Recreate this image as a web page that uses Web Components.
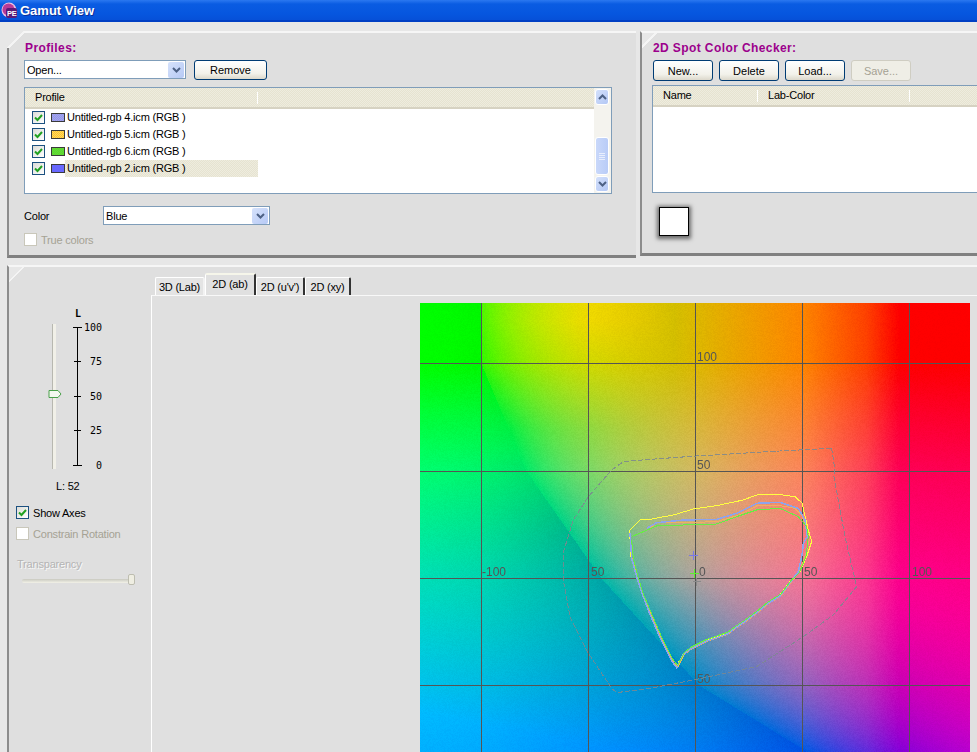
<!DOCTYPE html>
<html>
<head>
<meta charset="utf-8">
<title>Gamut View</title>
<style>
html, body { margin: 0; padding: 0; height: 100%; overflow: hidden; background: #e7e7e7; }
body { font: 11px "Liberation Sans", Arial, sans-serif; letter-spacing: -.2px; color: #000; }
</style>
</head>
<body>
<gamut-app></gamut-app>

<script>
const CHEVRON_DOWN = '<svg width="9" height="6" viewBox="0 0 9 6"><path d="M1 1l3.5 3.5L8 1" fill="none" stroke="#4d6185" stroke-width="2"/></svg>';
const CHEVRON_UP = '<svg width="9" height="6" viewBox="0 0 9 6"><path d="M1 5l3.5-3.5L8 5" fill="none" stroke="#4d6185" stroke-width="2"/></svg>';
const DITHER = 'repeating-conic-gradient(#eeecdf 0 25%, #e6e3d0 0 50%) 0 0/2px 2px';

class TitleBar extends HTMLElement {
    constructor() {
        super();
        this.attachShadow({ mode: 'open' }).innerHTML = `
            <style>
                :host {
                    display: flex;
                    align-items: center;
                    gap: 3px;
                    height: 22px;
                    box-sizing: border-box;
                    padding: 0 0 2px 1px;
                    background: linear-gradient(#2b78f0 0, #0a5ce2 4px, #0656df 14px, #0650d8 20px, #003fc4 20px);
                }
                span {
                    color: #fff;
                    font: bold 13px "Liberation Sans", Arial, sans-serif;
                    letter-spacing: 0;
                    text-shadow: 1px 1px 0 #0a2f9a;
                }
            </style>
            <svg width="16" height="16" viewBox="0 0 16 16">
                <circle cx="8" cy="8" r="7.5" fill="#f0c0e0"/>
                <circle cx="7.5" cy="7.5" r="6" fill="#b83a98"/>
                <rect x="5" y="6" width="11" height="10" rx="2" fill="#5c1a78"/>
                <text x="6" y="14" font-size="7.5" font-weight="bold" fill="#fff" font-family="Liberation Sans">PE</text>
            </svg>
            <span><slot></slot></span>
        `;
    }
}

class BevelPanel extends HTMLElement {
    constructor() {
        super();
        this.attachShadow({ mode: 'open' }).innerHTML = `
            <style>
                :host {
                    display: block;
                    position: relative;
                    box-sizing: border-box;
                    background: #dfdfdf;
                    border-top: 2px solid #f6f6f6;
                    border-left: 2px solid #8c8c8c;
                    border-bottom: 3px solid #808080;
                }
                :host::before {
                    content: "";
                    position: absolute;
                    left: -2px;
                    top: -2px;
                    width: 17px;
                    height: 17px;
                    background: linear-gradient(135deg, #e7e7e7 50%, #f4f4f4 50%, #f4f4f4 58%, transparent 58%);
                }
            </style>
            <slot></slot>
        `;
    }
}

class XpButton extends HTMLElement {
    constructor() {
        super();
        this.attachShadow({ mode: 'open' }).innerHTML = `
            <style>
                :host {
                    display: flex;
                    align-items: center;
                    justify-content: center;
                    box-sizing: border-box;
                    height: 21px;
                    border: 1px solid #003c74;
                    border-radius: 3px;
                    background: linear-gradient(#ffffff, #f2f1ea 70%, #dcd8cb);
                    font-size: 11px;
                    letter-spacing: 0;
                }
                :host([disabled]) {
                    border-color: #cfcdc2;
                    background: #efeee6;
                    color: #a5a294;
                }
            </style>
            <slot></slot>
        `;
    }
}

class XpCombo extends HTMLElement {
    constructor() {
        super();
        this.attachShadow({ mode: 'open' }).innerHTML = `
            <style>
                :host {
                    display: flex;
                    align-items: center;
                    box-sizing: border-box;
                    height: 19px;
                    border: 1px solid #7f9db9;
                    background: #fff;
                    padding: 0 1px 0 2px;
                    font-size: 11px;
                }
                span { flex: 1; }
                i {
                    display: flex;
                    align-items: center;
                    justify-content: center;
                    width: 16px;
                    height: 16px;
                    border-radius: 2px;
                    background: linear-gradient(135deg, #d6e2fb, #b6c9f5);
                }
            </style>
            <span><slot></slot></span>
            <i>${CHEVRON_DOWN}</i>
        `;
    }
}

class XpCheck extends HTMLElement {
    constructor() {
        super();
        const off = this.hasAttribute('disabled');
        const tick = this.hasAttribute('checked')
            ? '<svg width="11" height="11" viewBox="0 0 11 11"><path d="M2 5.5l2.5 2.5L9 3" fill="none" stroke="#21a121" stroke-width="2"/></svg>'
            : '';
        this.attachShadow({ mode: 'open' }).innerHTML = `
            <style>
                :host {
                    display: flex;
                    align-items: center;
                    gap: 4px;
                    height: 13px;
                    color: ${off ? '#a5a294' : '#000'};
                }
                i {
                    display: flex;
                    align-items: center;
                    justify-content: center;
                    flex: none;
                    box-sizing: border-box;
                    width: 13px;
                    height: 13px;
                    border: 1px solid ${off ? '#c9c7ba' : '#1c5180'};
                    background: ${off || !tick ? '#fff' : 'linear-gradient(135deg, #dcdcd7, #fff)'};
                }
            </style>
            <i>${tick}</i>
            <slot></slot>
        `;
    }
}

class XpList extends HTMLElement {
    constructor() {
        super();
        const cols = (this.getAttribute('columns') || '').split(',').map(c => c.split(':'));
        const head = cols.map(([name, w]) => `<span class="col" style="width:${w}px">${name}</span>`).join('');
        const bar = this.hasAttribute('scroll') ? `
            <div class="bar">
                <i class="btn">${CHEVRON_UP}</i>
                <b class="thumb"><u></u><u></u><u></u><u></u></b>
                <i class="btn">${CHEVRON_DOWN}</i>
            </div>` : '';
        this.attachShadow({ mode: 'open' }).innerHTML = `
            <style>
                :host {
                    display: flex;
                    box-sizing: border-box;
                    border: 1px solid #7f9db9;
                    background: #fff;
                    overflow: hidden;
                }
                .main { flex: 1; min-width: 0; }
                .head {
                    display: flex;
                    box-sizing: border-box;
                    height: 21px;
                    background: ${DITHER};
                    border-bottom: 2px solid #d6d2c2;
                    white-space: nowrap;
                }
                .col {
                    flex: none;
                    box-sizing: border-box;
                    padding-left: 10px;
                    line-height: 19px;
                    background: linear-gradient(#fff, #fff) right 4px / 1px 12px no-repeat;
                }
                .bar {
                    display: flex;
                    flex-direction: column;
                    flex: none;
                    box-sizing: border-box;
                    width: 17px;
                    padding: 1px 2px 1px 1px;
                    background: #f4f3ee;
                }
                .btn {
                    display: flex;
                    align-items: center;
                    justify-content: center;
                    flex: none;
                    height: 16px;
                    border: 1px solid #fff;
                    box-sizing: border-box;
                    border-radius: 3px;
                    background: linear-gradient(135deg, #d3e0fb, #b4c8f5);
                }
                .thumb {
                    display: flex;
                    flex-direction: column;
                    align-items: center;
                    justify-content: center;
                    gap: 1px;
                    box-sizing: border-box;
                    height: 38px;
                    margin: 32px 0 1px;
                    border: 1px solid #fff;
                    border-radius: 3px;
                    background: linear-gradient(90deg, #c9d8fa, #b9ccf7);
                }
                .thumb u { display: block; width: 6px; height: 1px; background: #e8eefd; }
            </style>
            <div class="main">
                <div class="head">${head}</div>
                <slot></slot>
            </div>
            ${bar}
        `;
    }
}

class ProfileRow extends HTMLElement {
    constructor() {
        super();
        const color = this.getAttribute('color');
        const dot = this.getAttribute('dot') || color;
        const sel = this.hasAttribute('selected');
        this.attachShadow({ mode: 'open' }).innerHTML = `
            <style>
                :host {
                    display: flex;
                    align-items: center;
                    height: 17px;
                    padding-left: 7px;
                }
                xp-check { flex: none; }
                .swatch {
                    flex: none;
                    box-sizing: border-box;
                    width: 14px;
                    height: 9px;
                    margin-left: 6px;
                    border: 1px solid #3a3a3a;
                    background: repeating-conic-gradient(${color} 0 25%, ${dot} 0 50%) 0 0/2px 2px;
                }
                .name {
                    flex: none;
                    box-sizing: border-box;
                    width: 193px;
                    height: 17px;
                    line-height: 17px;
                    padding-left: 2px;
                    background: ${sel ? DITHER : 'none'};
                }
            </style>
            <xp-check checked></xp-check>
            <div class="swatch"></div>
            <div class="name"><slot></slot></div>
        `;
    }
}

class XpTab extends HTMLElement {
    constructor() {
        super();
        this.attachShadow({ mode: 'open' }).innerHTML = `
            <style>
                :host {
                    display: flex;
                    align-items: center;
                    justify-content: center;
                    box-sizing: border-box;
                    height: 18px;
                    background: #e4e4e4;
                    border-top: 1px solid #fff;
                    border-left: 1px solid #fff;
                    border-right: 2px solid #333;
                    border-radius: 2px 2px 0 0;
                    white-space: nowrap;
                }
                :host([soft]) { border-right-color: #f2f2f2; }
                :host([active]) {
                    height: 22px;
                    padding-bottom: 3px;
                    background: #e0e0e0;
                    border-top: 2px solid #f6f6ea;
                }
            </style>
            <slot></slot>
        `;
    }
}

class LightnessScale extends HTMLElement {
    constructor() {
        super();
        const ticks = [[22, '100'], [56, '75'], [91, '50'], [125, '25'], [160, '0']].map(([y, t], i) => {
            const full = i === 0 || i === 4;
            return `<line x1="${full ? 64 : 65}" x2="${full ? 73 : 72}" y1="${y + .5}" y2="${y + .5}" stroke="#000"/>
                <text x="93" y="${y + 4}" text-anchor="end">${t}</text>`;
        }).join('');
        this.attachShadow({ mode: 'open' }).innerHTML = `
            <style>
                :host { display: block; height: 172px; }
                svg { display: block; }
                text { font: 10px "DejaVu Sans Mono", monospace; letter-spacing: 0; fill: #000; }
                .l { font-weight: bold; }
            </style>
            <svg width="142" height="172" shape-rendering="crispEdges">
                <text class="l" x="66" y="12">L</text>
                <rect x="43" y="19" width="4" height="145" fill="#f1f0e8"/>
                <rect x="43" y="19" width="1" height="145" fill="#b8b8b0"/>
                <line x1="68.5" x2="68.5" y1="22" y2="160" stroke="#000"/>
                ${ticks}
                <path d="M40 85.5h9l3 3.5-3 3.5h-9z" fill="#f4f8f0" stroke="#4aa04a" shape-rendering="auto"/>
            </svg>
        `;
    }
}

class TransparencySlider extends HTMLElement {
    constructor() {
        super();
        this.attachShadow({ mode: 'open' }).innerHTML = `
            <style>
                :host { display: block; height: 14px; margin-left: 13px; position: relative; }
                .track {
                    margin-top: 5px;
                    width: 113px;
                    height: 4px;
                    border-radius: 2px;
                    background: linear-gradient(#c9c9c0, #f3f2e8);
                    position: absolute;
                }
                .thumb {
                    position: absolute;
                    left: 106px;
                    top: 0;
                    width: 7px;
                    height: 11px;
                    box-sizing: border-box;
                    border: 1px solid #bdbdb0;
                    border-radius: 2px;
                    background: #efeee2;
                }
            </style>
            <div class="track"></div>
            <div class="thumb"></div>
        `;
    }
}

// piecewise linear lookup, table sorted by x
function lerp(table, x) {
    if (x <= table[0][0]) return table[0][1];
    for (let i = 1; i < table.length; i++) {
        if (x <= table[i][0]) {
            const [x0, y0] = table[i - 1];
            const [x1, y1] = table[i];
            return y0 + (y1 - y0) * (x - x0) / (x1 - x0);
        }
    }
    return table[table.length - 1][1];
}

class GamutPlot extends HTMLElement {
    constructor() {
        super();
        const line = (pts, color, width, extra = '') =>
            `<polyline fill="none" stroke="${color}" stroke-width="${width}" ${extra} points="${pts.map(p => p.join(',')).join(' ')}" vector-effect="non-scaling-stroke"/>`;
        const outer = [[845,25],[855,90],[852,110],[885,290],[920,440],[850,525],[760,590],[620,680],[430,720],[300,745],[200,758],[185,745],[115,640],[60,530],[40,420],[42,330],[70,240],[115,170],[185,90],[220,65],[300,58],[440,48],[540,42],[650,35],[845,25]];
        const tail = [[300,520],[315,555],[330,590],[350,630],[365,660],[380,680],[387,665],[400,640],[420,625],[440,615],[470,600],[500,590],[530,580],[550,565],[580,545],[620,515],[650,490],[690,465],[720,425]];
        const yellow = [[238,270],[240,295],[243,350],[260,410],[275,460],...tail,[750,395],[770,350],[785,305],[775,270],[762,215],[757,190],[735,170],[700,165],[620,165],[580,180],[500,197],[430,207],[370,225],[300,238],[270,240],[240,270]];
        const orange = [[240,285],[246,355],[262,410],[277,460],...tail.map(([x, y]) => [x + 3, y + 3]),[748,393],[765,350],[778,300],[770,265],[755,225],[735,205],[690,197],[620,198],[565,226],[500,245],[400,248],[320,248],[295,268]];
        const blue = [[240,280],[245,355],[260,410],[276,460],...tail.map(([x, y]) => [x, y + 3]),[745,395],[757,340],[760,310],[772,290],[765,240],[745,205],[690,187],[620,190],[560,220],[500,238],[400,240],[320,248],[290,265]];
        const green = [[245,300],[250,355],[264,410],[279,460],...tail.map(([x, y]) => [x + 3, y - 3]),[748,398],[768,350],[775,290],[770,260],[745,230],[690,205],[620,210],[560,230],[500,252],[400,255],[320,258],[280,275],[245,290]];
        const grid = [61, 168, 275, 382, 489].map(x => `<line x1="${x + .5}" x2="${x + .5}" y1="0" y2="449"/>`).join('')
            + [60, 168, 275, 382].map(y => `<line x1="0" x2="550" y1="${y + .5}" y2="${y + .5}"/>`).join('');
        const labels = [[277,58,'100'],[277,166,'50'],[62,273,'-100'],[171,273,'50'],[279,273,'0'],[384,273,'50'],[492,273,'100'],[277,380,'50']]
            .map(([x, y, t]) => `<text x="${x}" y="${y}">${t}</text>`).join('');
        const mark = (x, y, c, s) => `<path d="M${x - s} ${y}h${s * 2}M${x} ${y - s}v${s * 2}" stroke="${c}" fill="none" vector-effect="non-scaling-stroke"/>`;
        this.attachShadow({ mode: 'open' }).innerHTML = `
            <style>
                :host { display: block; position: relative; width: 550px; height: 449px; }
                canvas, svg { position: absolute; left: 0; top: 0; }
                text { font: 12px "Liberation Sans", Arial, sans-serif; letter-spacing: 0; fill: #555; }
            </style>
            <canvas width="550" height="449"></canvas>
            <svg width="550" height="449" viewBox="0 0 550 449">
                <g stroke="#555" shape-rendering="crispEdges">${grid}</g>
                ${labels}
                <g transform="translate(130 137) scale(.3333)" shape-rendering="crispEdges">
                    ${line(outer, '#7c8890', 1, 'stroke-dasharray="5 2" opacity=".85"')}
                    ${line(yellow, '#ffff40', 1)}
                    ${line(orange, '#f0b060', 1)}
                    ${line(blue, '#8ea4ec', 1.5)}
                    ${line(green, '#66ee44', 1)}
                    ${mark(430, 347, '#7878e8', 13)}
                    ${mark(440, 425, '#8a8a8a', 12)}
                    ${mark(433, 400, '#60f030', 13)}
                </g>
            </svg>
        `;
    }

    connectedCallback() {
        const ctx = this.shadowRoot.querySelector('canvas').getContext('2d');
        const img = ctx.createImageData(550, 449);
        const clamp = v => Math.max(0, Math.min(1, v));
        // channel curves read off the reference, a and b in Lab units
        const redEdge = [[-90, 60], [-80, 51], [-50, 2], [0, -44], [50, -79], [100, -100], [130, -100]];
        const greenByA = [[-128, 1], [-100, .97], [-50, .85], [0, .72], [50, .52], [80, .25], [95, 0]];
        const blueByB = [[-90, 1], [-80, .95], [-50, .8], [0, .62], [25, .5], [50, .38], [75, .2], [100, 0]];
        for (let y = 0; y < 449; y++) {
            for (let x = 0; x < 550; x++) {
                const a = (x - 275) / 107 * 50;
                const b = (275 - y) / 107.3 * 50;
                const d = a - lerp(redEdge, b);
                const k = 32 + 28 * clamp(-b / 50);
                let r = d <= 0 ? 0 : (1 - Math.exp(-d / k)) * (.8 + .2 * clamp((a + 50) / 100))
                    + .3 * clamp((b - 70) / 50) * clamp((-10 - a) / 40);
                let g = clamp(.88 + .0024 * b) * lerp(greenByA, a);
                if (d < 0) g *= 1 - .12 * Math.exp(d / 30) * clamp((60 - b) / 40);
                let bl = clamp(lerp(blueByB, b) * (1 - .0012 * a));
                // dotted dither seen all over the field
                const n = (((x * 7 + y * 13) ^ (x * y)) % 5 - 2) * 1.6;
                const i = (y * 550 + x) * 4;
                img.data[i] = clamp(r) * 255 + (r > 0 ? n : 0);
                img.data[i + 1] = g * 255 + (g > 0 ? n : 0);
                img.data[i + 2] = bl * 255 + (bl > 0 ? n : 0);
                img.data[i + 3] = 255;
            }
        }
        ctx.putImageData(img, 0, 0);
    }
}

class GamutApp extends HTMLElement {
    constructor() {
        super();
        this.attachShadow({ mode: 'open' }).innerHTML = `
            <style>
                :host {
                    display: flex;
                    flex-direction: column;
                    width: 977px;
                    height: 752px;
                    overflow: hidden;
                }
                .top { display: flex; gap: 4px; padding: 9px 0 0 7px; align-items: flex-start; }
                .profiles { flex: none; width: 629px; height: 227px; box-sizing: border-box; padding: 9px 0 0 15px; }
                .checker { flex: 1; min-width: 0; overflow: hidden; height: 225px; box-sizing: border-box; padding: 9px 0 0 10px; }
                h2 {
                    margin: 0 0 5px 1px;
                    height: 13px;
                    font: bold 12px/13px "Liberation Sans", Arial, sans-serif;
                    letter-spacing: .4px;
                    color: #9c008c;
                }
                .row { display: flex; align-items: flex-start; gap: 8px; }
                .row.btns { gap: 6px; margin: 0 0 4px 1px; }
                .open { width: 162px; }
                .remove { width: 73px; height: 20px; }
                .btns xp-button { width: 60px; flex: none; }
                .plist { width: 588px; height: 107px; margin-top: 7px; }
                .color { display: flex; align-items: center; margin-top: 12px; }
                .color span { width: 79px; }
                .color xp-combo { width: 167px; }
                .true { margin-top: 8px; }
                .slist { width: 340px; height: 108px; }
                .swatch {
                    box-sizing: border-box;
                    width: 30px;
                    height: 29px;
                    margin: 14px 0 0 7px;
                    background: #fff;
                    border: 1px solid #000;
                    box-shadow: 0 1px 4px 2px #6a6a6a;
                }
                .bottom { flex: 1; min-height: 0; margin: 7px 0 0 7px; display: flex; overflow: hidden; border-bottom: 0; }
                .controls { width: 142px; flex: none; padding-top: 38px; box-sizing: border-box; }
                .lval { height: 14px; line-height: 14px; margin-top: 2px; padding-left: 47px; }
                .show { margin: 13px 0 0 7px; }
                .constrain { margin: 8px 0 0 7px; }
                .transp {
                    margin: 17px 0 3px 8px;
                    height: 14px;
                    line-height: 14px;
                    color: #b4b4b4;
                    text-shadow: 1px 1px 0 #f8f8f8;
                }
                .view { flex: 1; min-width: 0; display: flex; flex-direction: column; }
                .tabs { display: flex; align-items: flex-end; height: 28px; flex: none; padding-left: 4px; }
                .stage {
                    flex: 1;
                    min-height: 0;
                    background: #e0e0e0;
                    border-left: 1px solid #fff;
                    border-top: 1px solid #f8f8f8;
                    padding: 7px 0 0 268px;
                }
            </style>
            <title-bar>Gamut View</title-bar>
            <div class="top">
                <bevel-panel class="profiles">
                    <h2>Profiles:</h2>
                    <div class="row">
                        <xp-combo class="open">Open...</xp-combo>
                        <xp-button class="remove">Remove</xp-button>
                    </div>
                    <xp-list class="plist" columns="Profile:233" scroll>
                        <profile-row color="#8f9ce8" dot="#a9a0f0">Untitled-rgb 4.icm (RGB )</profile-row>
                        <profile-row color="#ffc42e" dot="#ffd860">Untitled-rgb 5.icm (RGB )</profile-row>
                        <profile-row color="#58e422" dot="#66cc44">Untitled-rgb 6.icm (RGB )</profile-row>
                        <profile-row color="#6868ff" selected>Untitled-rgb 2.icm (RGB )</profile-row>
                    </xp-list>
                    <div class="color">
                        <span>Color</span>
                        <xp-combo>Blue</xp-combo>
                    </div>
                    <xp-check class="true" disabled>True colors</xp-check>
                </bevel-panel>
                <bevel-panel class="checker">
                    <h2>2D Spot Color Checker:</h2>
                    <div class="row btns">
                        <xp-button>New...</xp-button>
                        <xp-button>Delete</xp-button>
                        <xp-button>Load...</xp-button>
                        <xp-button disabled>Save...</xp-button>
                    </div>
                    <xp-list class="slist" columns="Name:105,Lab-Color:152"></xp-list>
                    <div class="swatch"></div>
                </bevel-panel>
            </div>
            <bevel-panel class="bottom">
                <div class="controls">
                    <lightness-scale></lightness-scale>
                    <div class="lval">L: 52</div>
                    <xp-check class="show" checked>Show Axes</xp-check>
                    <xp-check class="constrain" disabled>Constrain Rotation</xp-check>
                    <div class="transp">Transparency</div>
                    <transparency-slider></transparency-slider>
                </div>
                <div class="view">
                    <div class="tabs">
                        <xp-tab soft style="width:50px">3D (Lab)</xp-tab>
                        <xp-tab active style="width:51px">2D (ab)</xp-tab>
                        <xp-tab style="width:49px">2D (u'v')</xp-tab>
                        <xp-tab style="width:46px">2D (xy)</xp-tab>
                    </div>
                    <div class="stage"><gamut-plot></gamut-plot></div>
                </div>
            </bevel-panel>
        `;
    }
}

customElements.define('title-bar', TitleBar);
customElements.define('bevel-panel', BevelPanel);
customElements.define('xp-button', XpButton);
customElements.define('xp-combo', XpCombo);
customElements.define('xp-check', XpCheck);
customElements.define('xp-list', XpList);
customElements.define('profile-row', ProfileRow);
customElements.define('xp-tab', XpTab);
customElements.define('lightness-scale', LightnessScale);
customElements.define('transparency-slider', TransparencySlider);
customElements.define('gamut-plot', GamutPlot);
customElements.define('gamut-app', GamutApp);
</script>
</body>
</html>
